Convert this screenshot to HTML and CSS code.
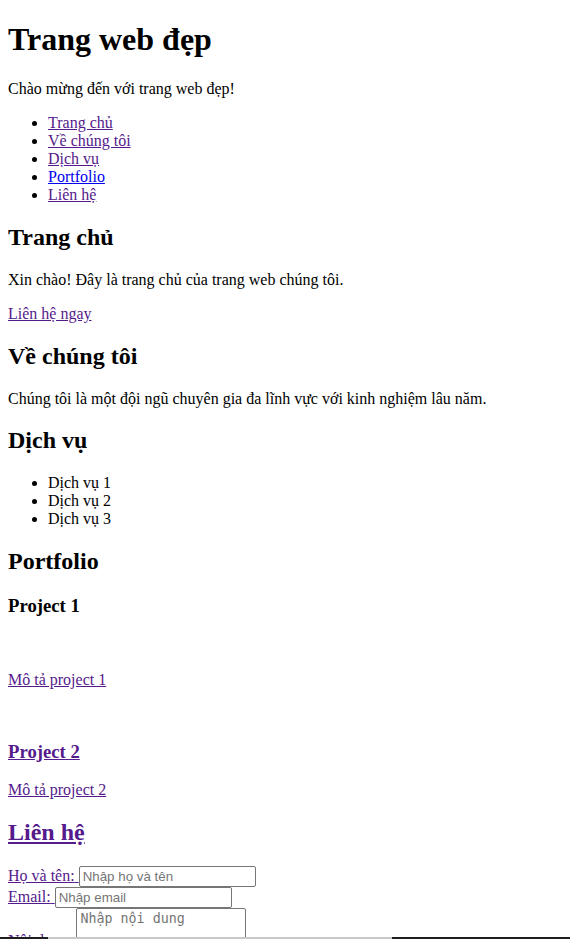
FILE: index.html
```html
<!DOCTYPE html>
<html lang="vi">
<head>
<meta charset="utf-8">
<title>Trang web đẹp</title>
<link rel="stylesheet" href="styles.css">
</head>
<body>
<header>
  <h1>Trang web đẹp</h1>
  <p>Chào mừng đến với trang web đẹp!</p>
  <nav>
    <ul>
      <li><a class="v" href="#home">Trang chủ</a></li>
      <li><a class="v" href="#about">Về chúng tôi</a></li>
      <li><a class="v" href="#services">Dịch vụ</a></li>
      <li><a href="#portfolio">Portfolio</a></li>
      <li><a class="v" href="#contact">Liên hệ</a></li>
    </ul>
  </nav>
</header>
<section id="home">
  <h2>Trang chủ</h2>
  <p>Xin chào! Đây là trang chủ của trang web chúng tôi.</p>
  <p><a class="v" href="#contact">Liên hệ ngay</a></p>
</section>
<section id="about">
  <h2>Về chúng tôi</h2>
  <p>Chúng tôi là một đội ngũ chuyên gia đa lĩnh vực với kinh nghiệm lâu năm.</p>
</section>
<section id="services">
  <h2>Dịch vụ</h2>
  <ul>
    <li>Dịch vụ 1</li>
    <li>Dịch vụ 2</li>
    <li>Dịch vụ 3</li>
  </ul>
</section>
<section id="portfolio">
  <h2>Portfolio</h2>
  <div class="project">
    <h3>Project 1</h3>
    <div class="thumb thumb-1"></div>
    <a class="v" href="#">
      <p class="desc">Mô tả project 1</p>
      <div class="thumb thumb-2"></div>
      <h3>Project 2</h3>
      <p>Mô tả project 2</p>
    </a>
  </div>
</section>
<a class="v" href="#">
<section id="contact">
  <h2>Liên hệ</h2>
  <form>
    <label for="name">Họ và tên:</label> <input type="text" id="name" placeholder="Nhập họ và tên"><br>
    <label for="email">Email:</label> <input type="email" id="email" placeholder="Nhập email"><br>
    <label for="msg">Nội dung:</label> <textarea id="msg" placeholder="Nhập nội dung"></textarea>
  </form>
</section>
</a>
<div class="bottom-bar"><div class="bar-thumb"></div></div>
</body>
</html>
```
FILE: styles.css
```css
html, body {
  background: #fff;
}
body {
  margin: 0 8px 8px;
  font-family: "Liberation Serif", "Times New Roman", serif;
  color: #000;
  overflow: hidden;
}
a {
  color: #0000ee;
}
a.v {
  color: #551a8b;
}
.thumb-1 {
  height: 35px;
}
.thumb-2 {
  height: 17px;
}
.desc {
  margin-top: 0;
}
input, textarea {
  font-size: 13.33px;
  box-sizing: border-box;
  border: 1px solid #767676;
  border-radius: 2px;
}
input {
  font-family: "Liberation Sans", Arial, sans-serif;
  width: 177px;
  height: 21px;
  padding: 1px 3px;
}
textarea {
  font-family: "DejaVu Sans Mono", monospace;
  width: 170px;
  height: 38px;
  padding: 2px 3px;
}
input::placeholder, textarea::placeholder {
  color: #757575;
}
.bottom-bar {
  position: fixed;
  left: 0;
  right: 0;
  bottom: 0;
  height: 2px;
  background: #1e1e1e;
}
.bar-thumb {
  margin-left: 48px;
  width: 344px;
  height: 2px;
  background: #c8c8c8;
}
```
